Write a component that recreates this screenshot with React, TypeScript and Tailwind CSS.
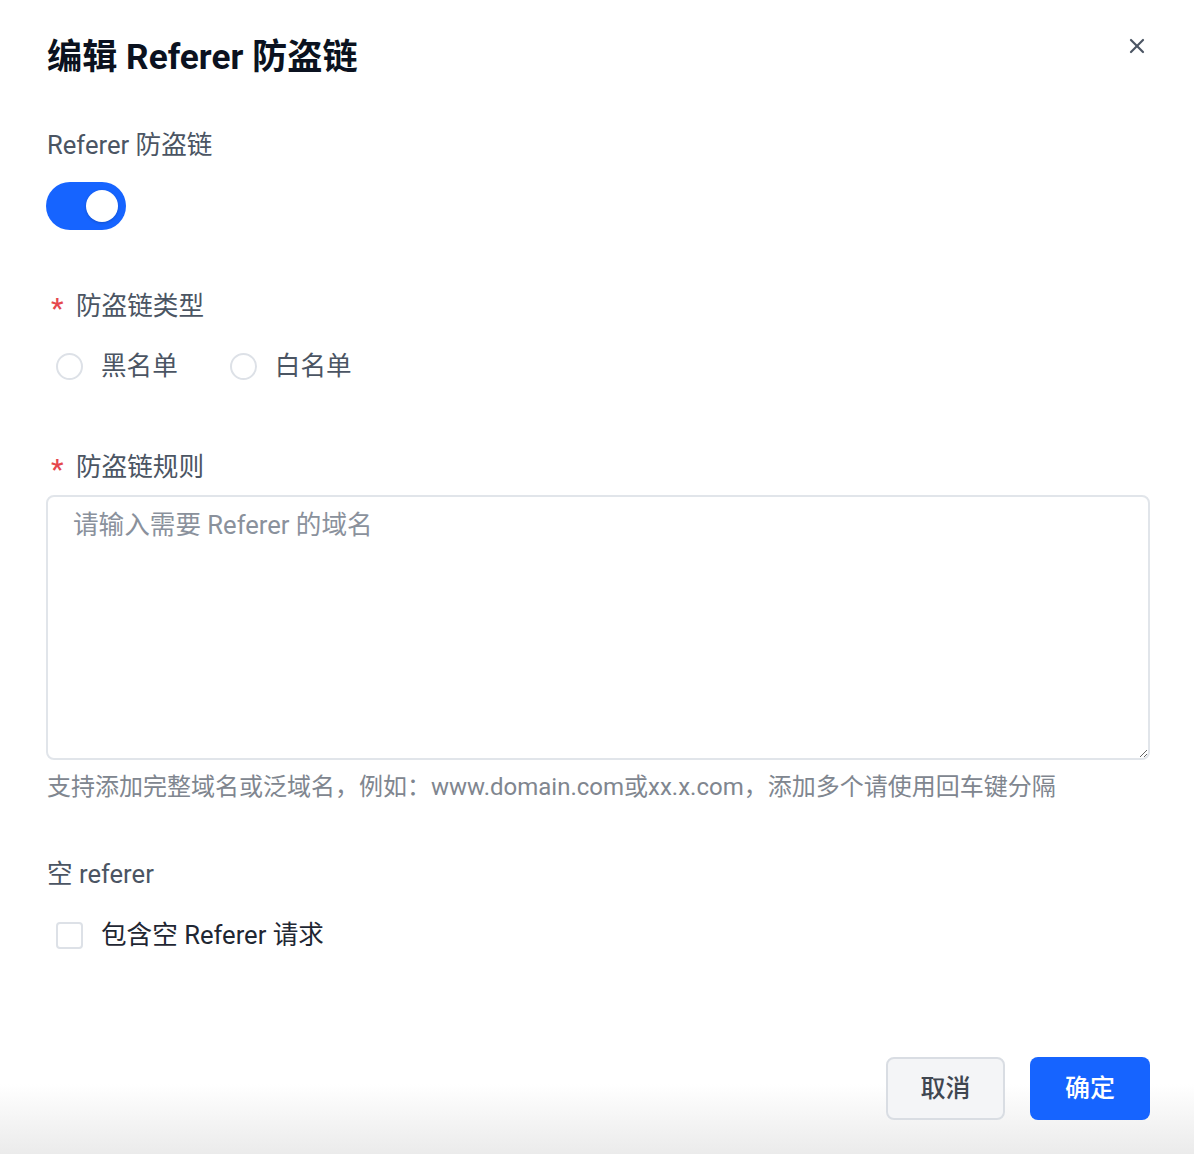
import { X } from "lucide-react";

const font = { fontFamily: '"Roboto", "Noto Sans CJK SC", sans-serif' };

function Label({ required, children }: { required?: boolean; children: React.ReactNode }) {
  return (
    <div className="flex items-center h-8 text-[25.6px] leading-8 text-[#4b5563]">
      {required && <span className="text-[#e5484d] w-[30px] pl-[5px] text-[28px] font-medium pt-[6px]">*</span>}
      <span>{children}</span>
    </div>
  );
}

function Radio({ label }: { label: string }) {
  return (
    <label className="flex items-center h-8">
      <span className="ml-[10px] w-[27px] h-[27px] rounded-full border-2 border-[#dde1e7] bg-white" />
      <span className="ml-[18px] text-[25.6px] leading-8 text-[#4b5563]">{label}</span>
    </label>
  );
}

export default function App() {
  return (
    <div
      className="min-h-[1154px] w-full bg-[linear-gradient(to_bottom,#ffffff_calc(100%-70px),#ebebeb)] pl-[46px] pr-[44px] flex flex-col"
      style={font}
    >
      <div className="flex items-start justify-between pt-[37px]">
        <h1 className="text-[35.2px] leading-10 font-bold text-[#0b1220] pl-[1px]">编辑 Referer 防盗链</h1>
        <X className="w-[24px] h-[24px] mt-[-3px] mr-[1px] text-[#4b5563]" strokeWidth={2.2} />
      </div>

      <div className="mt-[52px] pl-[1px]">
        <Label>Referer 防盗链</Label>
      </div>
      <div className="mt-[21px] w-[80px] h-[48px] rounded-full bg-[#1664ff] flex items-center justify-end pr-[8px]">
        <span className="w-[32px] h-[32px] rounded-full bg-white shadow-[0_1px_3px_rgba(0,0,0,0.2)]" />
      </div>

      <div className="mt-[60px]">
        <Label required>防盗链类型</Label>
      </div>
      <div className="mt-[28px] flex items-center gap-[42px]">
        <Radio label="黑名单" />
        <Radio label="白名单" />
      </div>

      <div className="mt-[69px]">
        <Label required>防盗链规则</Label>
      </div>
      <textarea
        className="mt-[12px] h-[265px] w-full rounded-[8px] border-2 border-[#e1e5ea] px-[25px] py-[12px] text-[25.6px] leading-8 text-[#1f2937] placeholder:text-[#8a919c] outline-none"
        placeholder="请输入需要 Referer 的域名"
        style={font}
      />
      <p className="mt-[11px] pl-[1px] text-[24px] leading-8 text-[#80868f]">
        支持添加完整域名或泛域名，例如：www.domain.com或xx.x.com，添加多个请使用回车键分隔
      </p>

      <div className="mt-[55px] pl-[1px]">
        <Label>空 referer</Label>
      </div>
      <label className="mt-[29px] flex items-center h-8">
        <span className="ml-[10px] w-[27px] h-[27px] rounded-[4px] border-2 border-[#dde1e7] bg-white" />
        <span className="ml-[18px] text-[25.6px] leading-8 text-[#1f2733]">包含空 Referer 请求</span>
      </label>

      <div className="mt-[106px] flex justify-end gap-[25px]">
        <button className="w-[119px] h-[63px] rounded-[8px] border-2 border-[#d9dde3] bg-[#f4f5f7] text-[25px] font-medium text-[#3f4650]">
          取消
        </button>
        <button className="w-[120px] h-[63px] rounded-[8px] bg-[#1664ff] text-[25px] font-medium text-white">
          确定
        </button>
      </div>
    </div>
  );
}
